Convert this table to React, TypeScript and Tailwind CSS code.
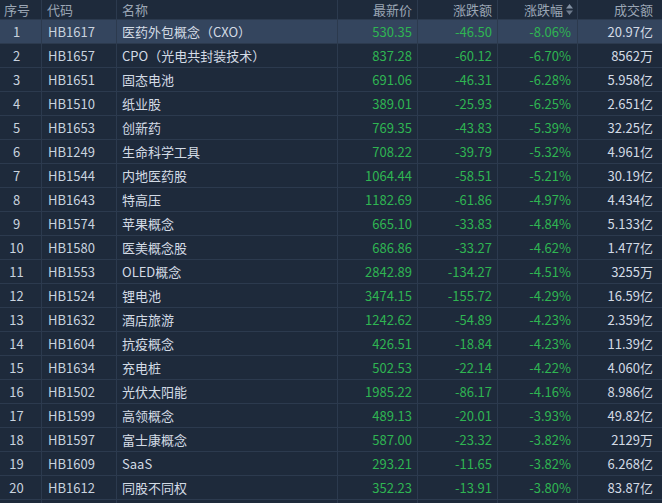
import React from "react";

const rows: [string, string, string, string, string, string][] = [
  ["HB1617", "医药外包概念（CXO）", "530.35", "-46.50", "-8.06%", "20.97亿"],
  ["HB1657", "CPO（光电共封装技术）", "837.28", "-60.12", "-6.70%", "8562万"],
  ["HB1651", "固态电池", "691.06", "-46.31", "-6.28%", "5.958亿"],
  ["HB1510", "纸业股", "389.01", "-25.93", "-6.25%", "2.651亿"],
  ["HB1653", "创新药", "769.35", "-43.83", "-5.39%", "32.25亿"],
  ["HB1249", "生命科学工具", "708.22", "-39.79", "-5.32%", "4.961亿"],
  ["HB1544", "内地医药股", "1064.44", "-58.51", "-5.21%", "30.19亿"],
  ["HB1643", "特高压", "1182.69", "-61.86", "-4.97%", "4.434亿"],
  ["HB1574", "苹果概念", "665.10", "-33.83", "-4.84%", "5.133亿"],
  ["HB1580", "医美概念股", "686.86", "-33.27", "-4.62%", "1.477亿"],
  ["HB1553", "OLED概念", "2842.89", "-134.27", "-4.51%", "3255万"],
  ["HB1524", "锂电池", "3474.15", "-155.72", "-4.29%", "16.59亿"],
  ["HB1632", "酒店旅游", "1242.62", "-54.89", "-4.23%", "2.359亿"],
  ["HB1604", "抗疫概念", "426.51", "-18.84", "-4.23%", "11.39亿"],
  ["HB1634", "充电桩", "502.53", "-22.14", "-4.22%", "4.060亿"],
  ["HB1502", "光伏太阳能", "1985.22", "-86.17", "-4.16%", "8.986亿"],
  ["HB1599", "高领概念", "489.13", "-20.01", "-3.93%", "49.82亿"],
  ["HB1597", "富士康概念", "587.00", "-23.32", "-3.82%", "2129万"],
  ["HB1609", "SaaS", "293.21", "-11.65", "-3.82%", "6.268亿"],
  ["HB1612", "同股不同权", "352.23", "-13.91", "-3.80%", "83.87亿"],
];

const grid = "grid grid-cols-[42px_75px_221px_80px_80px_80px_84px]";
const cell = "border-r border-b border-[#2c3a4e] flex items-center";

export default function App() {
  return (
    <div
      className="w-[662px] h-[503px] overflow-hidden bg-[#1e2a3b] text-[13px] leading-none"
      style={{ fontFamily: '"Noto Sans CJK SC", "Noto Sans", sans-serif' }}
    >
      <div className={`${grid} h-[20px] text-[#9ba6b5]`}>
        <div className={`${cell} pl-[4px]`}>序号</div>
        <div className={`${cell} pl-[5px]`}>代码</div>
        <div className={`${cell} pl-[5px]`}>名称</div>
        <div className={`${cell} justify-end pr-[5px]`}>最新价</div>
        <div className={`${cell} justify-end pr-[5px]`}>涨跌额</div>
        <div className={`${cell} justify-end pr-[4px] gap-[3px]`}>
          <span>涨跌幅</span>
          <svg width="7" height="11" viewBox="0 0 7 11">
            <path d="M3.5 0 L7 4.5 L0 4.5 Z" fill="#8391a3" />
            <path d="M3.5 11 L7 6.5 L0 6.5 Z" fill="#6d7a8c" />
          </svg>
        </div>
        <div className="border-b border-[#2c3a4e] flex items-center justify-end pr-[9px]">成交额</div>
      </div>
      {rows.map((r, i) => {
        const sel = i === 0;
        return (
          <div key={r[0]} className={`${grid} h-[24px] ${sel ? "bg-[#34455e]" : ""}`}>
            <div className={`${cell} justify-center pr-[8px] text-[#c9d3df]`}>{i + 1}</div>
            <div className={`${cell} pl-[6px] text-[#c9d3df]`}>{r[0]}</div>
            <div className={`${cell} pl-[5px] text-[#d3dbe5]`}>{r[1]}</div>
            <div className={`${cell} justify-end pr-[5px] text-[#2fb552]`}>{r[2]}</div>
            <div className={`${cell} justify-end pr-[5px] text-[#2fb552]`}>{r[3]}</div>
            <div className={`${cell} justify-end pr-[6px] text-[#2fb552]`}>{r[4]}</div>
            <div className="border-b border-[#2c3a4e] flex items-center justify-end pr-[9px] text-[#d3dbe5]">{r[5]}</div>
          </div>
        );
      })}
      <div className={`${grid} h-[24px]`}>
        <div className={cell}></div>
        <div className={cell}></div>
        <div className={cell}></div>
        <div className={cell}></div>
        <div className={cell}></div>
        <div className={cell}></div>
        <div></div>
      </div>
    </div>
  );
}
